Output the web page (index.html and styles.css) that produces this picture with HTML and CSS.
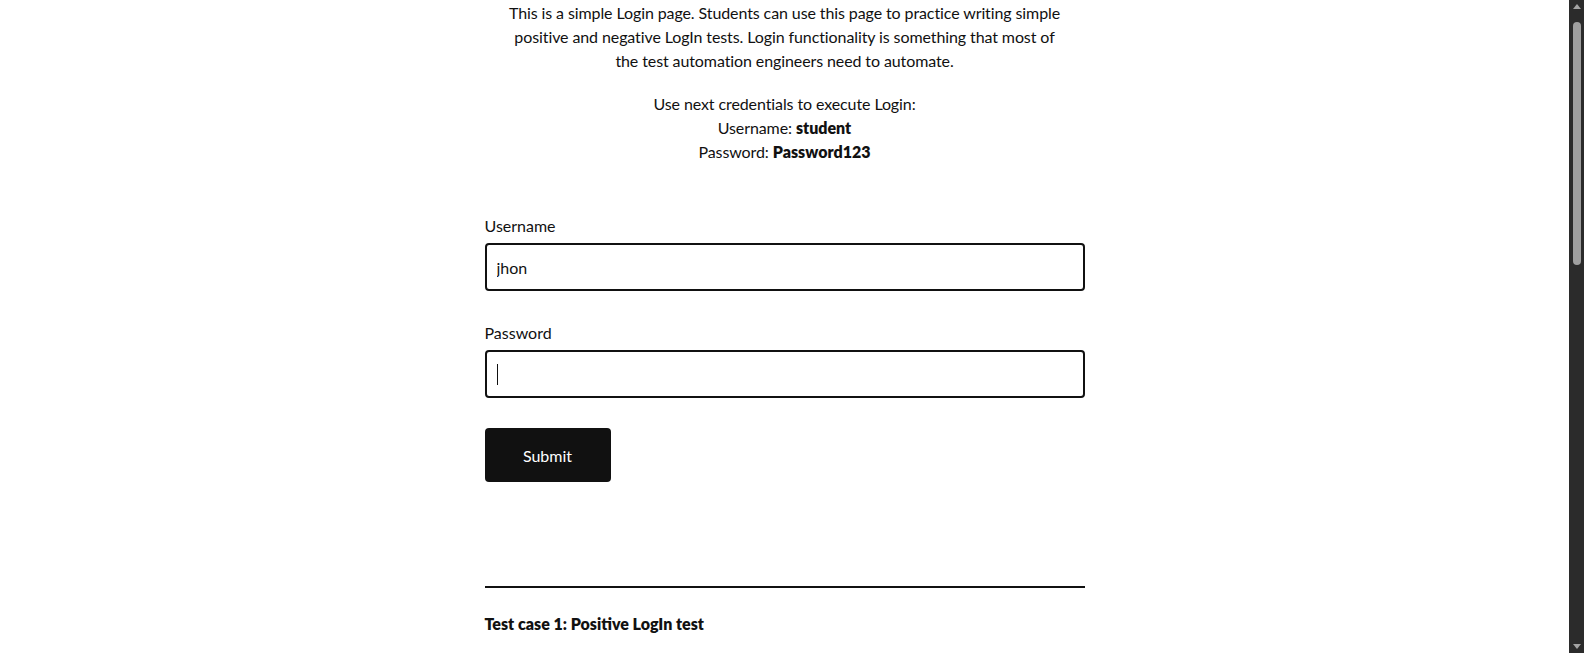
FILE: index.html
```html
<!DOCTYPE html>
<html lang="en">
<head>
<meta charset="utf-8">
<title>Test Login</title>
<link rel="stylesheet" href="styles.css">
</head>
<body>
<div class="viewport">
  <main class="page">
    <section class="content">
      <p class="intro">This is a simple Login page. Students can use this page to practice writing simple<br>positive and negative LogIn tests. Login functionality is something that most of<br>the test automation engineers need to automate.</p>
      <p class="creds">Use next credentials to execute Login:<br>Username: <strong>student</strong><br>Password: <strong>Password123</strong></p>
      <form class="login-form">
        <div class="field">
          <label class="field-label" for="username">Username</label>
          <input class="field-input" id="username" type="text" value="jhon">
        </div>
        <div class="field">
          <label class="field-label" for="password">Password</label>
          <div class="input-wrap">
            <input class="field-input" id="password" type="password" value="">
            <span class="caret"></span>
          </div>
        </div>
        <button class="submit-btn" type="button">Submit</button>
      </form>
      <hr class="divider">
      <h5 class="case-title">Test case 1: Positive LogIn test</h5>
    </section>
  </main>
  <div class="scrollbar">
    <span class="arrow arrow-up"></span>
    <div class="track"><span class="thumb"></span></div>
    <span class="arrow arrow-down"></span>
  </div>
</div>
</body>
</html>
```

FILE: styles.css
```css
* { box-sizing: border-box; }
html, body {
  margin: 0;
  padding: 0;
  height: 100%;
  overflow: hidden;
  background: #fff;
}
body {
  font-family: Lato, "Liberation Sans", sans-serif;
  font-size: 16px;
  line-height: 24px;
  color: #111;
}
.viewport {
  display: flex;
  height: 653px;
}
.page {
  flex: 1;
  display: flex;
  justify-content: center;
  overflow: hidden;
}
.content {
  width: 600px;
  padding-top: 1px;
}
.intro {
  margin: 0;
  text-align: center;
  letter-spacing: -0.1px;
}
.creds {
  margin: 19px 0 0;
  text-align: center;
  letter-spacing: -0.1px;
}
.creds strong {
  font-weight: 800;
  letter-spacing: 0;
}
.login-form {
  margin-top: 50px;
  display: flex;
  flex-direction: column;
  align-items: flex-start;
}
.field {
  width: 100%;
  display: flex;
  flex-direction: column;
  margin-bottom: 30px;
}
.field-label {
  display: block;
  margin-bottom: 5px;
}
.input-wrap { position: relative; }
.field-input {
  width: 100%;
  height: 48px;
  border: 2px solid #111;
  border-radius: 4px;
  padding: 0 10px;
  font-family: Lato, "Liberation Sans", sans-serif;
  font-size: 16px;
  color: #111;
  background: #fff;
  outline: none;
}
.caret {
  position: absolute;
  left: 12px;
  top: 14px;
  width: 1px;
  height: 21px;
  background: #111;
}
.submit-btn {
  margin-top: 0;
  width: 126px;
  height: 54px;
  border: none;
  border-radius: 4px;
  background: #111;
  color: #fff;
  font-family: Lato, "Liberation Sans", sans-serif;
  font-size: 16px;
}
.divider {
  margin: 104px 0 0;
  border: none;
  border-top: 2px solid #111;
  height: 0;
}
.case-title {
  margin: 24px 0 0;
  font-size: 16px;
  line-height: 24px;
  font-weight: 800;
}
.scrollbar {
  width: 15px;
  flex: none;
  background: #2b2b2b;
  display: flex;
  flex-direction: column;
  align-items: center;
}
.arrow {
  flex: none;
  width: 0;
  height: 0;
  border-left: 4px solid transparent;
  border-right: 4px solid transparent;
}
.arrow-up {
  margin-top: 4px;
  border-bottom: 5px solid #a3a3a3;
}
.arrow-down {
  margin-bottom: 4px;
  border-top: 5px solid #a3a3a3;
}
.track {
  flex: 1;
  width: 100%;
  display: flex;
  justify-content: center;
  padding-top: 13px;
}
.thumb {
  width: 8px;
  height: 243px;
  border-radius: 4px;
  background: #9f9f9f;
}
```
